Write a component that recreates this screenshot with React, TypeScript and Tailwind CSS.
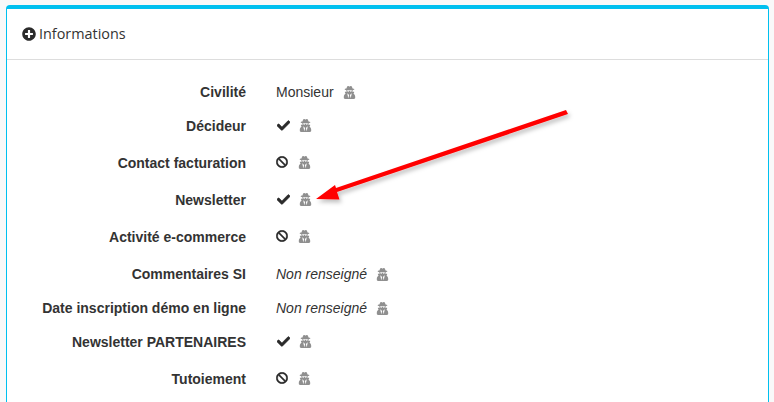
import React from "react";
import { FaBan, FaCheck, FaPlusCircle, FaUserSecret } from "react-icons/fa";

type RowKind = "text" | "empty" | "yes" | "no";

interface Row {
  label: string;
  kind: RowKind;
  value?: string;
}

const rows: Row[] = [
  { label: "Civilité", kind: "text", value: "Monsieur" },
  { label: "Décideur", kind: "yes" },
  { label: "Contact facturation", kind: "no" },
  { label: "Newsletter", kind: "yes" },
  { label: "Activité e-commerce", kind: "no" },
  { label: "Commentaires SI", kind: "empty", value: "Non renseigné" },
  { label: "Date inscription démo en ligne", kind: "empty", value: "Non renseigné" },
  { label: "Newsletter PARTENAIRES", kind: "yes" },
  { label: "Tutoiement", kind: "no" },
];

const Secret: React.FC = () => <FaUserSecret className="ml-[9px] text-[13px] text-[#8f8f8f]" />;

const Value: React.FC<{ row: Row }> = ({ row }) => {
  if (row.kind === "yes") return <FaCheck stroke="currentColor" strokeWidth={24} className="ml-px text-[13px] text-[#2b2b2b]" />;
  if (row.kind === "no") return <FaBan stroke="currentColor" strokeWidth={16} className="mr-px text-[12px] text-[#2b2b2b]" />;
  return <span className={row.kind === "empty" ? "italic" : ""}>{row.value}</span>;
};

export default function App() {
  return (
    <div className="relative h-[402px] w-[774px] overflow-hidden bg-[#f9f9f9] pl-[6px] pr-[5px] pt-[5px] font-['Liberation_Sans',Arial,sans-serif] text-[14px] text-[#333333]">
      <div className="h-[420px] rounded-t-[4px] border-x border-t-4 border-[#00c0ef] bg-white">
        {/* En-tête */}
        <div className="flex h-[51px] items-center gap-[3px] border-b border-[#dddddd] pl-[15px] font-['Open_Sans',sans-serif] text-[#333333]">
          <FaPlusCircle className="text-[14px] text-[#2b2b2b]" />
          <span className="text-[14.4px]">Informations</span>
        </div>

        {/* Lignes */}
        <div className="pt-[23px]">
          {rows.map((row) => {
            const isIcon = row.kind === "yes" || row.kind === "no";
            return (
              <div key={row.label} className={`flex items-start ${isIcon ? "h-[37px]" : "h-[34px]"}`}>
                <div className="w-[239px] text-right font-bold leading-[18px]">{row.label}</div>
                <div className={`ml-[30px] flex items-center ${isIcon ? "h-[16px]" : "h-[18px]"}`}>
                  <Value row={row} />
                  <Secret />
                </div>
              </div>
            );
          })}
        </div>
      </div>

      {/* Flèche rouge */}
      <svg className="absolute left-0 top-0" width="774" height="402" viewBox="0 0 774 402">
        <defs>
          <filter id="arrow-shadow" x="-10%" y="-20%" width="120%" height="150%">
            <feDropShadow dx="2" dy="3" stdDeviation="2" floodColor="#000000" floodOpacity="0.25" />
          </filter>
        </defs>
        <g filter="url(#arrow-shadow)" fill="#ff0000">
          <path d="M566 110 L568 114 L337 192 L339.5 199.5 L316 199 L335 185 L336 188 Z" />
        </g>
      </svg>
    </div>
  );
}
